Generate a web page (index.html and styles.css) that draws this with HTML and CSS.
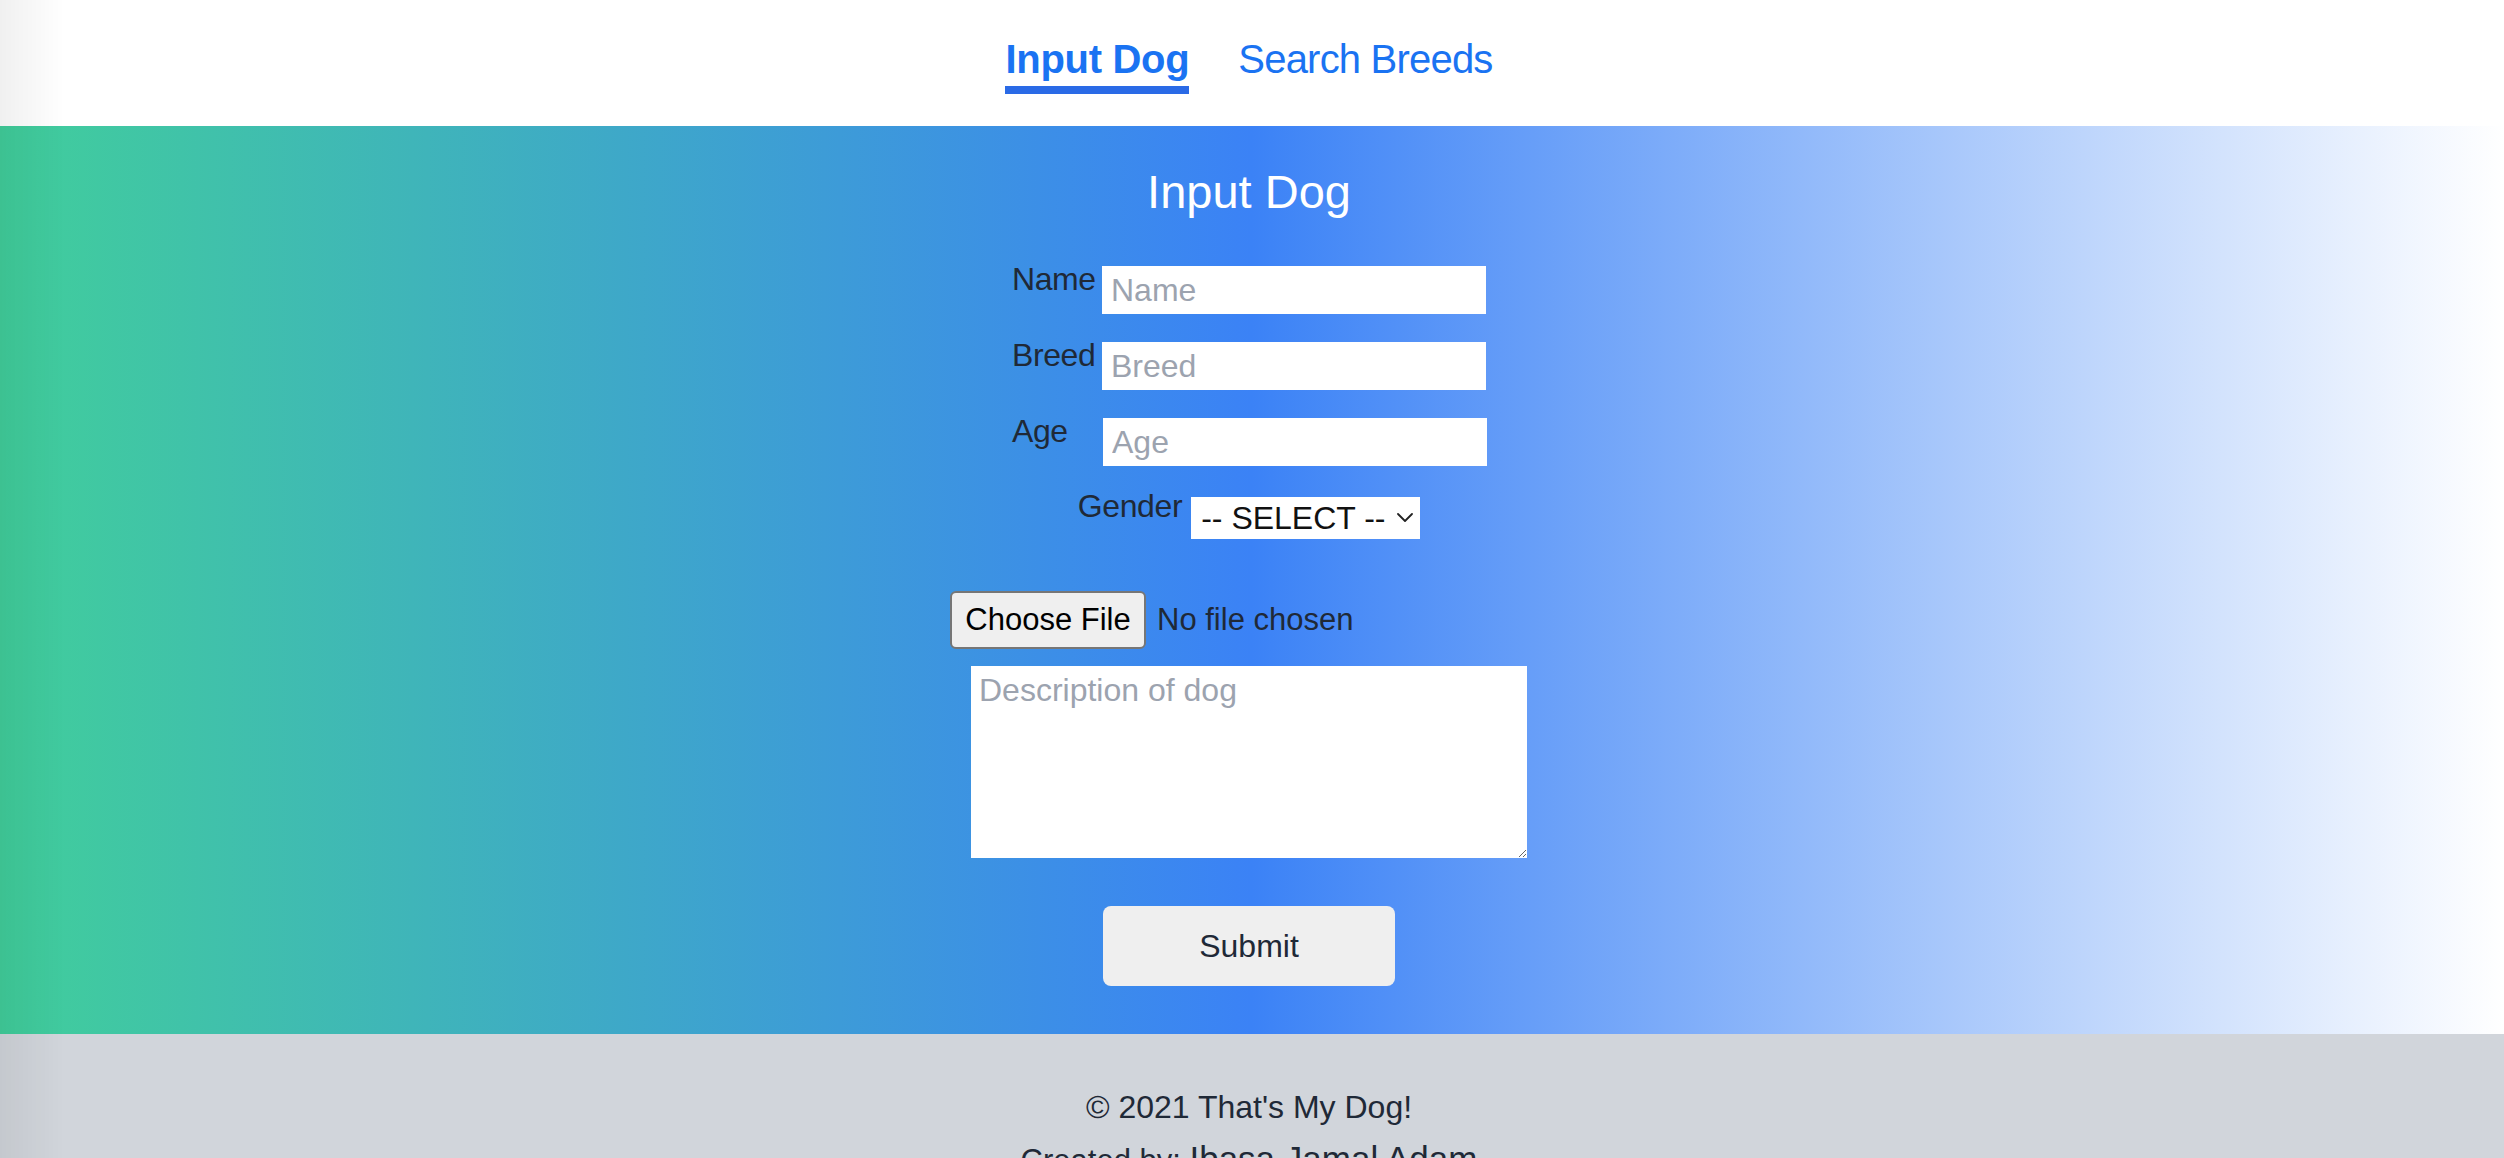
FILE: index.html
```html
<!DOCTYPE html>
<html lang="en">
<head>
<meta charset="utf-8">
<title>That's My Dog!</title>
<link rel="stylesheet" href="styles.css">
</head>
<body>
<header class="site-header">
  <nav class="nav">
    <a class="nav-link nav-link--active" href="#">Input Dog</a>
    <a class="nav-link" href="#">Search Breeds</a>
  </nav>
</header>
<main class="hero">
  <h1 class="hero-title">Input Dog</h1>
  <form class="dog-form">
    <div class="fields">
      <div class="field-row">
        <label class="field-label" for="name">Name</label>
        <input class="text-input" id="name" type="text" placeholder="Name">
      </div>
      <div class="field-row">
        <label class="field-label" for="breed">Breed</label>
        <input class="text-input" id="breed" type="text" placeholder="Breed">
      </div>
      <div class="field-row">
        <label class="field-label" for="age">Age</label>
        <input class="text-input text-input--age" id="age" type="text" placeholder="Age">
      </div>
    </div>
    <div class="gender-row">
      <label class="field-label" for="gender">Gender</label>
      <div class="select-wrap">
        <select class="select" id="gender">
          <option>-- SELECT --</option>
          <option>Male</option>
          <option>Female</option>
        </select>
        <svg class="chevron" viewBox="0 0 16 9" aria-hidden="true"><path d="M1 1l7 7 7-7" fill="none" stroke="#222" stroke-width="1.8" stroke-linecap="round" stroke-linejoin="round"/></svg>
      </div>
    </div>
    <div class="file-row">
      <button type="button" class="file-button">Choose File</button>
      <span class="file-status">No file chosen</span>
    </div>
    <textarea class="description" placeholder="Description of dog"></textarea>
    <button type="submit" class="submit">Submit</button>
  </form>
</main>
<footer class="site-footer">
  <p class="copyright">© 2021 That's My Dog!</p>
  <p class="credit">Created by: <span class="author">Ibasa Jamal Adam</span></p>
</footer>
<div class="edge-shade"></div>
</body>
</html>
```
FILE: styles.css
```css
* { box-sizing: border-box; }
html { scrollbar-width: none; }
html::-webkit-scrollbar { display: none; width: 0; }
html, body { margin: 0; padding: 0; }
body {
  font-family: "Liberation Sans", Arial, Helvetica, sans-serif;
  color: #1f2937;
  background: #fff;
}

/* header */
.site-header { height: 126px; background: #fff; }
.nav {
  display: flex;
  justify-content: center;
  gap: 49px;
  padding: 39px 6px 0 0;
}
.nav-link {
  display: block;
  font-size: 40px;
  line-height: 40px;
  color: #1a73f2;
  text-decoration: none;
  letter-spacing: -0.8px;
  padding-bottom: 7px;
  border-bottom: 8px solid transparent;
}
.nav-link--active {
  font-weight: 700;
  letter-spacing: -0.3px;
  border-bottom-color: #2a6ae6;
}

/* hero */
.hero {
  height: 908px;
  background: linear-gradient(to right, #41ce9b, #3b82f6, #ffffff);
  padding: 42px 6px 0 0;
  display: flex;
  flex-direction: column;
  align-items: center;
}
.hero-title {
  margin: 0;
  font-size: 47px;
  line-height: 47px;
  font-weight: 400;
  color: #fff;
}
.dog-form {
  display: flex;
  flex-direction: column;
  align-items: center;
  margin-top: 48px;
}
.fields {
  width: 474px;
  display: flex;
  flex-direction: column;
  gap: 25px;
}
.field-row { display: flex; align-items: flex-start; }
.field-label {
  font-size: 32px;
  line-height: 32px;
  color: #1f2937;
  letter-spacing: -0.4px;
}
.field-row .field-label { width: 90px; flex: none; }
.text-input {
  width: 384px;
  height: 48px;
  margin-top: 3px;
  border: 0;
  padding: 0 9px;
  font-family: inherit;
  font-size: 32px;
  background: #fff;
  color: #1f2937;
  outline: none;
}
.text-input--age { margin-left: 1px; }
.text-input::placeholder { color: #9ca3af; }

.gender-row {
  display: flex;
  align-items: flex-start;
  gap: 9px;
  margin-top: 24px;
}
.select-wrap { position: relative; margin-top: 7px; }
.select {
  appearance: none;
  -webkit-appearance: none;
  display: block;
  width: 229px;
  height: 42px;
  border: 0;
  border-radius: 0;
  background: #fff;
  font-family: inherit;
  font-size: 32px;
  color: #111;
  padding: 0 0 0 10px;
  outline: none;
}
.chevron {
  position: absolute;
  right: 7px;
  top: 16px;
  width: 16px;
  height: 9px;
  pointer-events: none;
}

.file-row {
  width: 598px;
  display: flex;
  align-items: center;
  gap: 11px;
  margin-top: 52px;
}
.file-button {
  width: 196px;
  height: 58px;
  background: #efefef;
  border: 2px solid #767676;
  border-radius: 6px;
  font-family: inherit;
  font-size: 31px;
  color: #000;
  padding: 0;
}
.file-status { font-size: 31px; color: #1f2937; }

.description {
  display: block;
  margin-top: 17px;
  width: 556px;
  height: 192px;
  padding: 6px 8px;
  border: 0;
  font-family: inherit;
  font-size: 32px;
  line-height: 36px;
  background: #fff;
  outline: none;
}
.description::placeholder { color: #9ca3af; }

.submit {
  margin-top: 48px;
  width: 292px;
  height: 80px;
  border: 0;
  border-radius: 8px;
  background: #efefef;
  font-family: inherit;
  font-size: 32px;
  color: #1f2937;
}

/* footer */
.site-footer {
  background: #d1d5db;
  padding: 49px 6px 40px 0;
  text-align: center;
}
.copyright { margin: 0; font-size: 32px; line-height: 48px; color: #1f2937; }
.credit { margin: 2px 0 0; font-size: 31px; line-height: 52px; color: #1f2937; }
.author { font-size: 35px; }

/* soft shadow along the left edge of the window */
.edge-shade {
  position: fixed;
  left: 0;
  top: 0;
  bottom: 0;
  width: 64px;
  background: linear-gradient(to right, rgba(0,0,0,0.06), rgba(0,0,0,0));
  pointer-events: none;
}
```
